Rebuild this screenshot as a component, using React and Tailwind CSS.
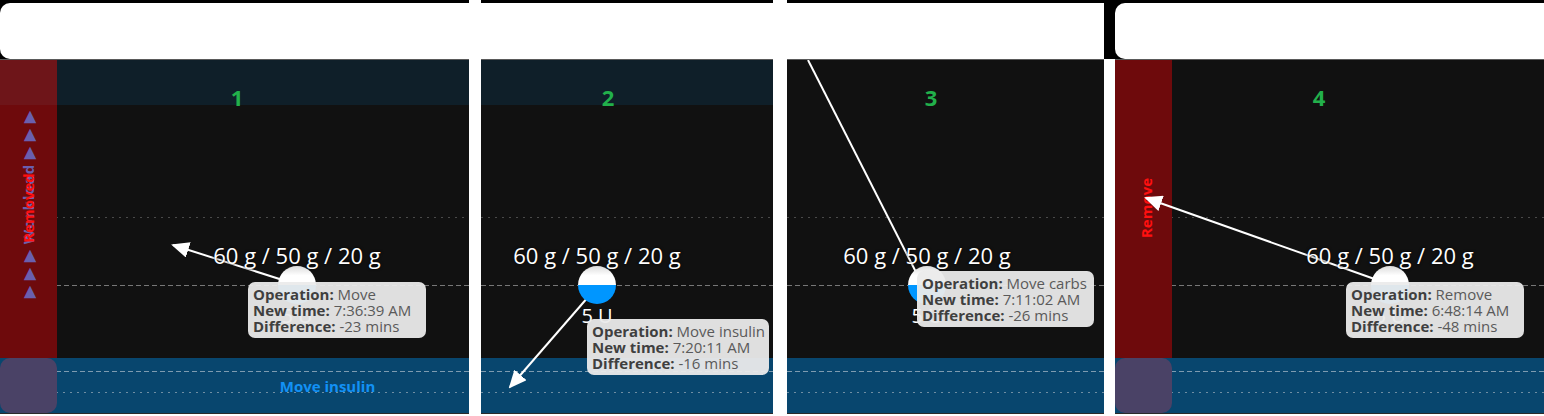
import React from "react";

const panels = [
  {
    w: "w-[469px]",
    num: "1",
    numX: 237,
    teal: true,
    card: true,
    strip: "removed",
    cx: 297,
    tip: { x: 248, y: 222, w: 178 },
    op: "Move",
    time: "7:36:39 AM",
    diff: "-23 mins",
    arrow: { x1: 292, y1: 223, x2: 173, y2: 185, head: true },
    insulin: true,
  },
  {
    w: "w-[292px]",
    num: "2",
    numX: 127,
    teal: true,
    cx: 116,
    tip: { x: 106, y: 259, w: 182 },
    op: "Move insulin",
    time: "7:20:11 AM",
    diff: "-16 mins",
    arrow: { x1: 108, y1: 236, x2: 29, y2: 327, head: true },
  },
  {
    w: "w-[317px]",
    num: "3",
    numX: 144,
    cx: 140,
    tip: { x: 130, y: 211, w: 177 },
    op: "Move carbs",
    time: "7:11:02 AM",
    diff: "-26 mins",
    arrow: { x1: 21, y1: 0, x2: 134, y2: 222, head: false },
  },
  {
    w: "w-[429px]",
    num: "4",
    numX: 204,
    card: true,
    strip: "remove",
    cx: 275,
    tip: { x: 231, y: 222, w: 178 },
    op: "Remove",
    time: "6:48:14 AM",
    diff: "-48 mins",
    arrow: { x1: 268, y1: 222, x2: 31, y2: 138, head: true },
  },
];

function Arrow({ a, id }) {
  return (
    <svg className="absolute inset-0 w-full h-full pointer-events-none" fill="none">
      <defs>
        <marker id={id} markerWidth="9" markerHeight="8" refX="8" refY="4" orient="auto" markerUnits="strokeWidth">
          <path d="M0 0 L9 4 L0 8 Z" fill="#ffffff" />
        </marker>
      </defs>
      <line
        x1={a.x1}
        y1={a.y1}
        x2={a.x2}
        y2={a.y2}
        stroke="#ffffff"
        strokeWidth="2"
        markerEnd={a.head ? `url(#${id})` : undefined}
      />
    </svg>
  );
}

function Panel({ p, i }) {
  return (
    <div className={`${p.w} h-full flex flex-col shrink-0`}>
      {/* header */}
      <div className="h-[60px] bg-black pt-[3px] flex flex-col">
        <div className={`flex-1 bg-white ${p.card ? "rounded-l-[10px]" : ""}`}></div>
        <div className="h-px bg-[#5a5a5a]"></div>
      </div>

      {/* chart body */}
      <div className="relative flex-1 flex flex-col bg-[#111111] overflow-hidden">
        <div className={`h-[45px] ${p.teal ? "bg-[#0f1f29]" : "bg-[#111111]"}`}></div>
        <div className="flex-1"></div>
        <div className="h-[55px] bg-[#08466e] flex items-center justify-center">
          {p.insulin && (
            <span className="font-['Open_Sans',sans-serif] font-bold text-[15px] text-[#1291f5] ml-[186px] mt-[1px]">
              Move insulin
            </span>
          )}
        </div>

        {/* grid lines */}
        <div className="absolute left-0 right-0 top-[157px] h-px bg-[linear-gradient(to_right,#4a4a4a_2px,transparent_2px)] bg-[length:7px_1px]"></div>
        <div className="absolute left-0 right-0 top-[225px] h-px bg-[linear-gradient(to_right,#777_5px,transparent_5px)] bg-[length:8px_1px]"></div>
        <div className="absolute left-0 right-0 top-[311px] h-px bg-[linear-gradient(to_right,#7d9bb0_5px,transparent_5px)] bg-[length:8px_1px]"></div>
        <div className="absolute left-0 right-0 top-[332px] h-px bg-[linear-gradient(to_right,#6f8ea3_2px,transparent_2px)] bg-[length:7px_1px]"></div>

        {/* left strip */}
        {p.strip && (
          <div className="absolute left-0 top-0 bottom-0 w-[57px] flex flex-col">
            <div className={`h-[45px] ${p.teal ? "bg-[#6e1519]" : "bg-[#6e0a0c]"}`}></div>
            <div className="flex-1 bg-[#6e0a0c]"></div>
            <div className="h-[55px] bg-[#4a4266] rounded-[10px]"></div>
          </div>
        )}
        {p.strip === "removed" && (
          <>
            <div className="absolute left-[28px] top-[144px] -translate-x-1/2 -translate-y-1/2 -rotate-90 whitespace-nowrap font-['Open_Sans',sans-serif] font-bold text-[15px] text-[#6a5fae] tracking-[1px]">
              ▶ ▶ ▶ Workload ▶ ▶ ▶
            </div>
            <div className="absolute left-[28px] top-[148px] -translate-x-1/2 -translate-y-1/2 -rotate-90 whitespace-nowrap font-['Open_Sans',sans-serif] font-bold text-[15px] text-[#ff1010]">
              Removed
            </div>
          </>
        )}
        {p.strip === "remove" && (
          <div className="absolute left-[31px] top-[148px] -translate-x-1/2 -translate-y-1/2 -rotate-90 whitespace-nowrap font-['Open_Sans',sans-serif] font-bold text-[15px] text-[#ff1010]">
            Remove
          </div>
        )}

        {/* number */}
        <div
          className="absolute top-[22px] -translate-x-1/2 font-['Open_Sans',sans-serif] font-bold text-[22px] leading-[30px] text-[#22b04b]"
          style={{ left: p.numX }}
        >
          {p.num}
        </div>

        <Arrow a={p.arrow} id={`arrowhead-${i}`} />

        {/* food marker */}
        <div
          className="absolute top-[180px] -translate-x-1/2 whitespace-nowrap font-['Open_Sans',sans-serif] text-[22px] leading-[30px] text-white [text-shadow:0_0_3px_#000]"
          style={{ left: p.cx }}
        >
          60 g / 50 g / 20 g
        </div>
        <div
          className="absolute top-[206px] -translate-x-1/2 w-[38px] h-[38px] rounded-full bg-[linear-gradient(to_bottom,#dcdcdc_0%,#ffffff_25%,#ffffff_50%,#0096ff_50%)]"
          style={{ left: p.cx }}
        ></div>
        <div
          className="absolute top-[242px] -translate-x-1/2 whitespace-nowrap font-['Open_Sans',sans-serif] text-[20px] leading-[28px] text-white"
          style={{ left: p.cx }}
        >
          5 U
        </div>

        {/* tooltip */}
        <div
          className="absolute rounded-[7px] bg-[#ebebeb]/95 px-[5px] py-[4px] font-['Open_Sans',sans-serif] text-[15px] leading-[16px] text-[#5a5a5a] whitespace-nowrap overflow-hidden"
          style={{ left: p.tip.x, top: p.tip.y, width: p.tip.w }}
        >
          <div>
            <span className="font-bold text-[#3f3f3f]">Operation:</span> {p.op}
          </div>
          <div>
            <span className="font-bold text-[#3f3f3f]">New time:</span> {p.time}
          </div>
          <div>
            <span className="font-bold text-[#3f3f3f]">Difference:</span> {p.diff}
          </div>
        </div>
      </div>

      {/* bottom edge */}
      <div className="h-[3px] bg-white border-t border-[#2a2a2a]"></div>
    </div>
  );
}

export default function App() {
  return (
    <div className="w-[1544px] h-[416px] flex bg-white overflow-hidden">
      <Panel p={panels[0]} i={0} />
      <div className="w-[12px] shrink-0 bg-white"></div>
      <Panel p={panels[1]} i={1} />
      <div className="w-[14px] shrink-0 bg-white"></div>
      <Panel p={panels[2]} i={2} />
      <div className="w-[11px] shrink-0 flex flex-col">
        <div className="h-[59px] bg-black"></div>
        <div className="flex-1 bg-white"></div>
      </div>
      <Panel p={panels[3]} i={3} />
    </div>
  );
}
